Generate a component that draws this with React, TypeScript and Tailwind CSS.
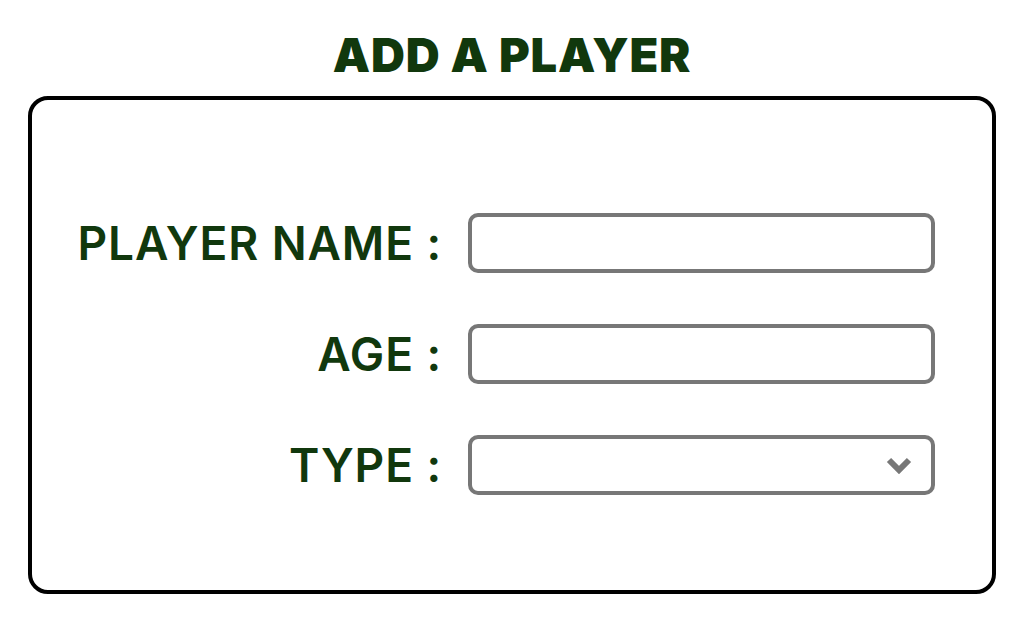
const FIELDS = [
  { label: 'PLAYER NAME :', kind: 'text' },
  { label: 'AGE :', kind: 'text' },
  { label: 'TYPE :', kind: 'select' },
]

export default function App() {
  return (
    <div className="min-h-screen bg-white px-[28px] pt-[30px] font-['Inter',sans-serif]">
      <h1 className="text-center text-[47px] leading-[50px] font-black tracking-[0.8px] text-[#11380d]">ADD A PLAYER</h1>

      <div className="mt-[16px] h-[498px] rounded-[20px] border-4 border-black pt-[113px]">
        <form className="flex flex-col gap-[51px]">
          {FIELDS.map((f) => (
            <div key={f.label} className="flex items-center gap-[26px]">
              <label className="w-[410px] text-right text-[46px] leading-none font-semibold tracking-[0.9px] text-[#11380d]">
                {f.label}
              </label>
              {f.kind === 'select' ? (
                <div className="relative h-[60px] w-[467px] rounded-[10px] border-4 border-[#777777]">
                  <select className="h-full w-full appearance-none bg-transparent outline-none" />
                  <svg
                    width="26"
                    height="18"
                    viewBox="0 0 26 18"
                    className="pointer-events-none absolute right-[19px] top-[17px]"
                  >
                    <path d="M3 4 L13 14 L23 4" fill="none" stroke="#777777" strokeWidth="6" strokeLinejoin="miter" />
                  </svg>
                </div>
              ) : (
                <input
                  type="text"
                  className="h-[60px] w-[467px] rounded-[10px] border-4 border-[#777777] px-3 outline-none"
                />
              )}
            </div>
          ))}
        </form>
      </div>
    </div>
  )
}
